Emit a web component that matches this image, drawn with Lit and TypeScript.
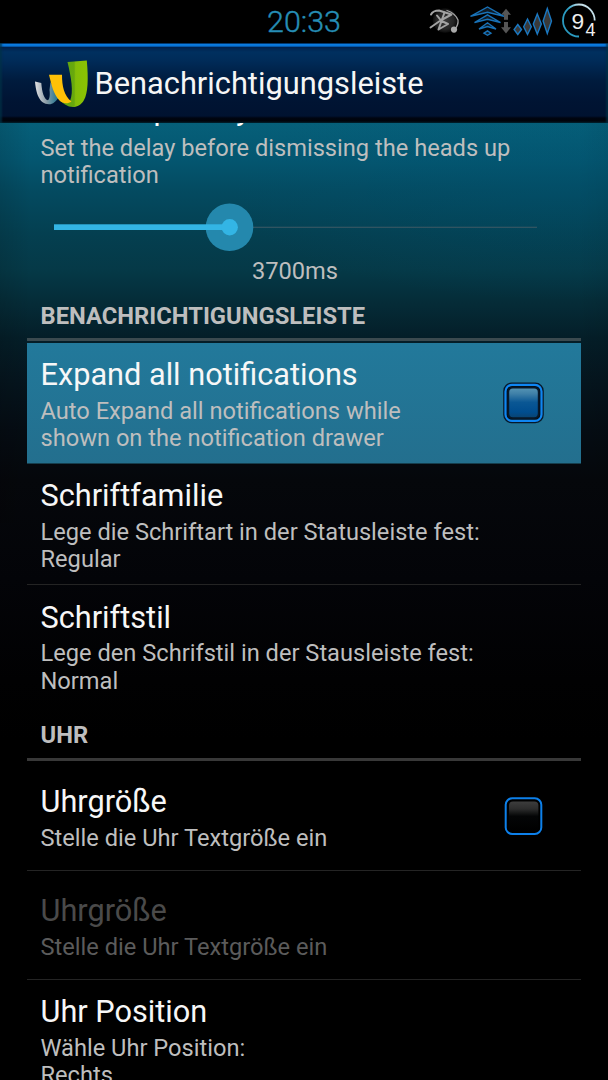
import { LitElement, html, svg, css } from "lit";
import { customElement, property } from "lit/decorators.js";
import { classMap } from "lit/directives/class-map.js";

@customElement("pref-check")
class PrefCheck extends LitElement {
  @property({ type: Boolean }) on = false;
  static styles = css`
    :host { display: block; width: 42px; height: 42px; }
    svg { display: block; }
  `;
  render() {
    return html`<svg width="42" height="42" viewBox="0 0 42 42">
      <defs>
        <linearGradient id="on" x1="0" y1="0" x2="0" y2="1">
          <stop offset="0" stop-color="#5695b5" /><stop offset=".2" stop-color="#3f80a8" />
          <stop offset=".48" stop-color="#0a5794" /><stop offset=".8" stop-color="#004d8f" /><stop offset="1" stop-color="#0a4370" />
        </linearGradient>
        <linearGradient id="off" x1="0" y1="0" x2="0" y2="1">
          <stop offset="0" stop-color="#3d3d3d" /><stop offset=".25" stop-color="#2d2d2d" />
          <stop offset=".5" stop-color="#040506" /><stop offset="1" stop-color="#000" />
        </linearGradient>
      </defs>
      ${this.on
        ? svg`<rect x=".2" y=".6" width="40.6" height="40.6" rx="8.5" fill="#07182a"/>
          <rect x="2.5" y="2.9" width="36" height="36" rx="6.5" fill="#061019" stroke="#0f86f2" stroke-width="2.2"/>
          <rect x="5.3" y="5.7" width="30.4" height="30.4" rx="4.5" fill="url(#on)" stroke="#07182a" stroke-width="1.8"/>`
        : svg`<rect x="2.7" y="3.3" width="35.6" height="35.6" rx="6.5" fill="#000" stroke="#0d80ea" stroke-width="2"/>
          <rect x="6" y="6.5" width="29.4" height="29.4" rx="4" fill="url(#off)"/>`}
    </svg>`;
  }
}

@customElement("pref-row")
class PrefRow extends LitElement {
  @property() heading = "";
  @property({ attribute: false }) lines: string[] = [];
  @property() check = "";
  @property({ type: Boolean }) pressed = false;
  @property({ type: Boolean }) dim = false;
  @property({ type: Boolean }) last = false;
  static styles = css`
    :host { display: block; }
    .row { box-sizing: border-box; display: flex; align-items: center; justify-content: space-between;
      padding: 0 36.5px 0 13.5px; height: 121.5px; border-bottom: 1.5px solid #242424; }
    .short { height: 109px; }
    .pressed { background: linear-gradient(#22799b, #236f8e); height: 121px; border-bottom-color: #163e4d; }
    .last { border-bottom-color: transparent; }
    .title { font-size: 30.7px; line-height: 35.6px; color: #f7f7f7; white-space: nowrap; }
    .sum { font-size: 23.65px; line-height: 27.6px; color: #bebebe; margin-top: 5px; white-space: nowrap; }
    .text { padding-top: 4.6px; }
    .short .text { padding-top: 5.2px; }
    .dim .title { color: #4a4a4a; }
    .dim .sum { color: #5b5b5b; }
  `;
  render() {
    return html`<div class=${classMap({ row: true, short: this.lines.length < 2, pressed: this.pressed, dim: this.dim, last: this.last })}>
      <div class="text">
        <div class="title">${this.heading}</div>
        <div class="sum">${this.lines.map((l) => html`<div>${l}</div>`)}</div>
      </div>
      ${this.check ? html`<pref-check ?on=${this.check === "on"}></pref-check>` : ""}
    </div>`;
  }
}

@customElement("app-root")
class AppRoot extends LitElement {
  static styles = css`
    :host { display: block; width: 608px; height: 1080px; overflow: hidden; font-family: Roboto, sans-serif; background: #000; }
    .screen { display: flex; flex-direction: column; height: 1080px;
      background:
        radial-gradient(ellipse 330px 110px at 560px 190px, rgba(0,84,116,.3), transparent),
        linear-gradient(90deg, rgba(0,0,0,.1), transparent 5%, transparent 95%, rgba(0,0,0,.06)) 0 123px / 100% 400px no-repeat,
        linear-gradient(#06607a 120px, #045670 160px, #044a60 192px, #043f50 235px, #053947 270px, #052c38 302px, #041e28 338px, #05151e 380px, #050c13 430px, #05070b 480px, #030408 580px, #010102 680px, #000 740px); }
    .status { height: 43px; flex: none; background: #000; display: grid; grid-template-columns: 1fr auto 1fr; align-items: center; }
    .time { grid-column: 2; font-size: 30.4px; line-height: 43px; color: #268eb5; font-weight: 300; -webkit-text-stroke: .4px #268eb5; }
    .tray { justify-self: end; height: 43px; }
    .tray svg, .bar svg { display: block; }
    .bar { height: 80px; flex: none; box-sizing: border-box; display: flex; align-items: center; padding: 1px 0 0 33px;
      background: linear-gradient(#001c3e 0, #0a7be0 1.5px, #0872d4 3px, #00214d 4.5px, #00305f 9px, #002b58 18px, #001b3d 38px, #001433 58px, #001230 73px, #000511 75px, #00030a 78px, #02212d 80px);
      box-shadow: inset 3px 0 2px -1px rgba(0,50,70,.7), inset -3px 0 2px -1px rgba(0,50,70,.7); }
    .bar h1 { margin: 1.5px 0 0 4.5px; font: 400 30.8px/36px Roboto, sans-serif; color: #f6f6f6; }
    .list { flex: 1; min-height: 0; overflow: hidden; padding: 0 27px; }
    .delay { height: 176px; display: flex; flex-direction: column; }
    .hidden-title { font-size: 30.7px; line-height: 36px; color: #fff; margin: -31px 0 0 14px; }
    .sum { font-size: 23.65px; line-height: 27.6px; color: #bebebe; padding: 6.6px 0 0 13.5px; }
    .slider { display: block; margin: 10.4px 0 0 0; flex: none; }
    .value { font-size: 23.65px; line-height: 28px; color: #bebebe; text-align: center; padding-top: 3px; padding-right: 18px; }
    .cat { box-sizing: border-box; border-bottom: 3px solid #3b4a4f; font-size: 23.75px; line-height: 28px; font-weight: 700; color: #bebebe; padding: 2.5px 13.5px 0; height: 42px; margin-bottom: 1.5px; }
    .uhr { border-bottom-color: #383838; height: 54px; padding-top: 14.2px; margin-bottom: 1px; }
  `;
  render() {
    return html`<div class="screen">
      <div class="status">
        <div class="time">20:33</div>
        <div class="tray">${this.tray()}</div>
      </div>
      <div class="bar">
        <svg width="57" height="56" viewBox="33 56 57 56">
          <defs>
            <linearGradient id="gr"><stop offset="0" stop-color="#e1e1e3" /><stop offset=".45" stop-color="#8f9fa9" /><stop offset="1" stop-color="#14708c" /></linearGradient>
            <linearGradient id="gn"><stop offset="0" stop-color="#59a512" /><stop offset=".55" stop-color="#68a80d" /><stop offset=".6" stop-color="#83bd08" /><stop offset="1" stop-color="#8bc302" /></linearGradient>
          </defs>
          <path d="M35 81.5L41.3 83C42 92 44 99.5 48 100.3C50 98.5 50 94 49.5 90L50.5 82L59 97C56 101.5 53 104.3 49 104.3C39 104 36 93 35 81.5Z" fill="url(#gr)" />
          <path d="M67.5 62L86.8 60.4C88.5 79 88 93 84 100C80 107.5 72 109 65 104.5C61.5 102.5 59 99.5 57.5 97L70 101C74 92 71 77 67.5 62Z" fill="url(#gn)" />
          <path d="M49 74.8H62C62 86 64 96 71.5 101.5C68 104 63 104 59.5 100.5C53.5 94.5 51.5 85 49 74.8Z" fill="#ffc107" />
        </svg>
        <h1>Benachrichtigungsleiste</h1>
      </div>
      <div class="list">
        <div class="delay">
          <div class="hidden-title">Heads up delay</div>
          <div class="sum">Set the delay before dismissing the heads up<br />notification</div>
          <svg class="slider" width="554" height="54" viewBox="27 200 554 54">
            <rect x="54" y="226.7" width="483" height="1.2" fill="#365763" />
            <circle cx="229.5" cy="227.3" r="23.8" fill="#2488ad" />
            <rect x="54" y="224.3" width="175" height="5.7" fill="#33b5e5" />
            <circle cx="229.7" cy="227.2" r="8.2" fill="#33b5e5" />
          </svg>
          <div class="value">3700ms</div>
        </div>
        <div class="cat">BENACHRICHTIGUNGSLEISTE</div>
        <pref-row pressed check="on" heading="Expand all notifications" .lines=${["Auto Expand all notifications while", "shown on the notification drawer"]}></pref-row>
        <pref-row heading="Schriftfamilie" .lines=${["Lege die Schriftart in der Statusleiste fest:", "Regular"]}></pref-row>
        <pref-row last heading="Schriftstil" .lines=${["Lege den Schrifstil in der Stausleiste fest:", "Normal"]}></pref-row>
        <div class="cat uhr">UHR</div>
        <pref-row check="off" heading="Uhrgröße" .lines=${["Stelle die Uhr Textgröße ein"]}></pref-row>
        <pref-row dim heading="Uhrgröße" .lines=${["Stelle die Uhr Textgröße ein"]}></pref-row>
        <pref-row heading="Uhr Position" .lines=${["Wähle Uhr Position:", "Rechts"]}></pref-row>
      </div>
    </div>`;
  }
  tray() {
    const diamond = (x: number, top: number, bottom: number, w: number) => svg`
      <path d="M${x} ${top}L${x + w} ${(top + bottom) / 2}L${x} ${bottom}L${x - w} ${(top + bottom) / 2}Z" fill="#3a3a3a" stroke="#1a78c2" stroke-width="1.4"/>`;
    return html`<svg width="188" height="43" viewBox="420 0 188 43">
      <defs>
        <radialGradient id="ball"><stop offset="0" stop-color="#393939" /><stop offset=".7" stop-color="#252525" /><stop offset="1" stop-color="#0c0c0c" /></radialGradient>
        <linearGradient id="ring" x1="0" y1="1" x2="1" y2="0"><stop offset="0" stop-color="#2795bb" /><stop offset=".6" stop-color="#2c9fc5" /><stop offset="1" stop-color="#c5dfe9" /></linearGradient>
      </defs>
      <circle cx="445" cy="20.5" r="12.2" fill="url(#ball)" />
      <g fill="none" stroke="#a2a2a2" stroke-linejoin="round" stroke-linecap="round">
        <path d="M431 14.5Q433 10.5 439 10.5L451.5 14.5L440.5 20.5" stroke-width="2" />
        <path d="M430.5 27.5L440.5 20.5L448 24L438.5 29.5L444.5 12.5M437 15.5L441 20.5" stroke-width="2" />
        <path d="M447 10.5Q455 13 458 20Q458.5 25 455 29" stroke-width="1.3" />
      </g>
      <circle cx="454" cy="29.6" r="3.1" fill="#aaa" />
      <g fill="#101b25" stroke="#1872b8" stroke-width="1.4" stroke-linejoin="miter">
        <path d="M470.5 16.3L487.5 7L504 16.3L487.5 12.3Z" />
        <path d="M474.5 22.5L487.5 14.8L500.5 22.5L487.5 19.2Z" />
        <path d="M479 29L487.5 22.8L496 29L487.5 26.5Z" />
        <path d="M484 33.2L487.5 30.8L491 33.2L487.5 35.3Z" />
      </g>
      <path d="M506 8.7L511 14.8H508V19.7H504V14.8H501ZM506 33.4L511 27.3H508V22H504V27.3H501Z" fill="#555" />
      ${diamond(517.8, 24.5, 34.5, 3.7)}${diamond(527.5, 19, 34.5, 3.8)}${diamond(537.3, 14, 34, 4)}${diamond(547.3, 8.5, 33.5, 4.2)}
      <path d="M594.7 20.5A16 16 0 0 0 579 4.5" fill="none" stroke="#c5dfe9" stroke-width="1.8" />
      <path d="M579 4.5A16 16 0 1 0 579 36.5" fill="none" stroke="url(#ring)" stroke-width="1.8" />
      <text x="571.6" y="28.8" font-family="Liberation Sans" font-size="22.8" fill="#eee">9</text>
      <text x="585.4" y="35.6" font-family="Liberation Sans" font-size="18" fill="#eee">4</text>
    </svg>`;
  }
}
